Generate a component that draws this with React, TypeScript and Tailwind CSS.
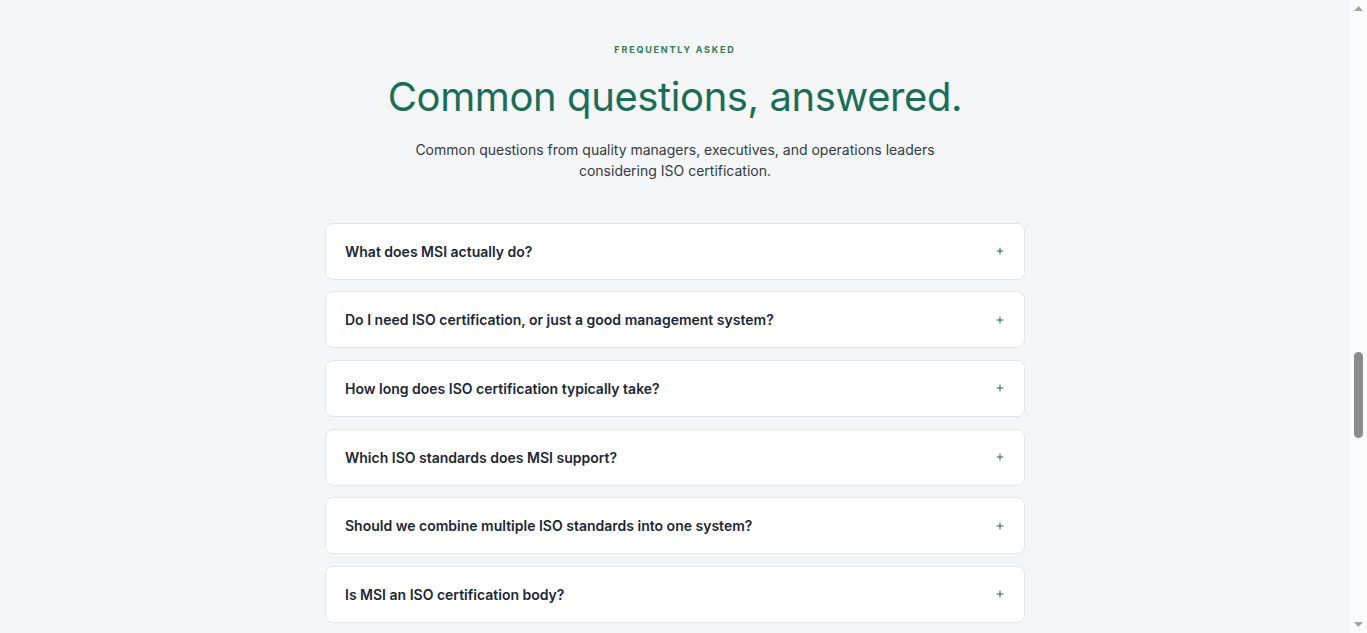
import { Plus } from "lucide-react";

const questions = [
  "What does MSI actually do?",
  "Do I need ISO certification, or just a good management system?",
  "How long does ISO certification typically take?",
  "Which ISO standards does MSI support?",
  "Should we combine multiple ISO standards into one system?",
  "Is MSI an ISO certification body?",
];

export default function App() {
  return (
    <div className="flex h-screen overflow-hidden bg-[#f4f6f7] font-['Inter',sans-serif]">
      <main className="flex-1 overflow-hidden">
        <section className="mx-auto flex max-w-[700px] flex-col items-center pt-[43px] pb-20">
          <div className="text-[9px] font-bold uppercase tracking-[0.2em] text-[#2e7d52]">Frequently Asked</div>
          <h2 className="mt-[16px] text-[40px] font-normal leading-[48px] tracking-[-0.01em] text-[#1b6d57]">
            Common questions, answered.
          </h2>
          <p className="mt-[18px] max-w-[530px] text-center text-[14px] leading-[21px] text-[#333b45]">
            Common questions from quality managers, executives, and operations leaders considering ISO certification.
          </p>

          <div className="mt-[42px] flex w-full flex-col gap-[11.7px]">
            {questions.map((q) => (
              <FaqItem key={q} question={q} />
            ))}
          </div>
        </section>
      </main>
      <ScrollTrack />
    </div>
  );
}

function FaqItem({ question }: { question: string }) {
  return (
    <button className="flex h-[57px] w-full items-center justify-between rounded-lg border border-[#e3e7ea] bg-white pl-[19px] pr-[19px] text-left">
      <span className="text-[14px] font-semibold text-[#1c2736]">{question}</span>
      <Plus size={10} strokeWidth={2.6} className="text-[#2e6b4f]" />
    </button>
  );
}

// page scroll rail on the right edge
function ScrollTrack() {
  return (
    <aside className="flex w-[17px] shrink-0 flex-col items-center bg-[#fbfbfb]">
      <svg width="9" height="5" viewBox="0 0 9 5" className="mt-[6px]">
        <path d="M0 5 L4.5 0 L9 5 Z" fill="#a3a3a3" />
      </svg>
      <div className="mt-[341px] h-[86px] w-[9px] rounded-full bg-[#8c8c8c]" />
      <div className="flex-1" />
      <svg width="9" height="5" viewBox="0 0 9 5" className="mb-[6px]">
        <path d="M0 0 L9 0 L4.5 5 Z" fill="#a3a3a3" />
      </svg>
    </aside>
  );
}
